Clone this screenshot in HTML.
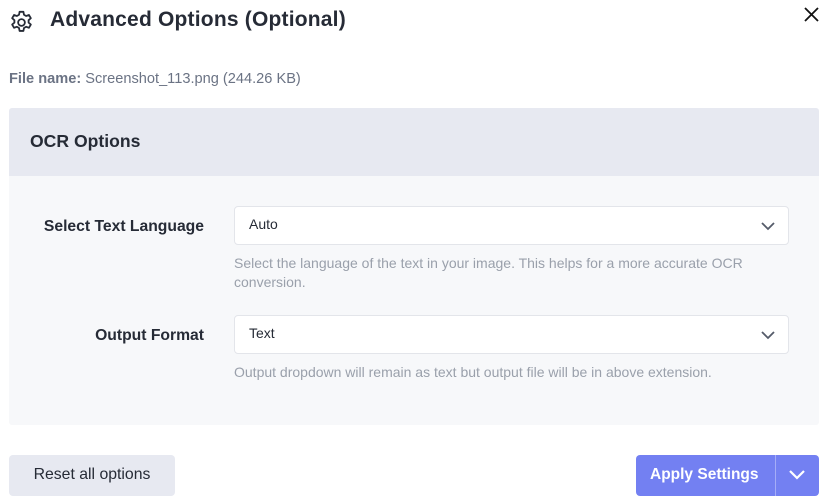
<!DOCTYPE html>
<html><head><style>
*{box-sizing:border-box;margin:0;padding:0}
body{width:826px;height:503px;background:#fff;font-family:"Liberation Sans",sans-serif;position:relative;overflow:hidden;color:#1f2633}
.abs{position:absolute}
h1{position:absolute;left:50px;top:8px;font-size:21px;font-weight:bold;color:#262b36;letter-spacing:.2px}
.fn{left:9px;top:71px;font-size:14.6px;color:#6b7384}
.panel{left:9px;top:108px;width:810px;height:317px;background:#f7f8fa;border-radius:3px}
.ph{left:9px;top:108px;width:810px;height:68px;background:#e7e9f1;border-radius:3px 3px 0 0}
.ph span{position:absolute;left:21px;top:23px;font-size:17.6px;font-weight:bold;color:#262b36}
.lab{font-size:15.7px;font-weight:bold;color:#262b36;text-align:right;width:200px;left:4px}
.sel{left:234px;width:555px;height:39px;background:#fff;border:1px solid #e3e5ea;border-radius:4px;font-size:14px;padding:9px 14px;color:#262b36}
.help{left:234px;font-size:14px;color:#9aa0ab;line-height:19px;width:525px}
.btn{top:455px;height:41px;border-radius:4px}
</style></head><body>
<svg class="abs" style="left:8px;top:9px" width="27" height="27" viewBox="0 0 24 24" fill="none" stroke="#262b36" stroke-width="1.6" stroke-linejoin="round"><path d="M10.3 2.5h3.4l.5 2.6 1.9 1.1 2.5-.9 1.7 2.9-2 1.7v2.2l2 1.7-1.7 2.9-2.5-.9-1.9 1.1-.5 2.6h-3.4l-.5-2.6-1.9-1.1-2.5.9-1.7-2.9 2-1.7v-2.2l-2-1.7 1.7-2.9 2.5.9 1.9-1.1z"/><circle cx="12" cy="12" r="3"/></svg>
<h1>Advanced Options (Optional)</h1>
<svg class="abs" style="left:804px;top:7px" width="15" height="15" viewBox="0 0 15 15" stroke="#111" stroke-width="1.8"><path d="M1 1L14 14M14 1L1 14"/></svg>
<div class="abs fn"><b>File name:</b> Screenshot_113.png (244.26 KB)</div>
<div class="abs panel"></div>
<div class="abs ph"><span>OCR Options</span></div>
<div class="abs lab" style="top:218px">Select Text Language</div>
<div class="abs sel" style="top:206px">Auto</div>
<svg class="abs" style="left:760px;top:221px" width="16" height="10" viewBox="0 0 16 10" fill="none" stroke="#555b6a" stroke-width="1.8"><path d="M2 2l6 6 6-6"/></svg>
<div class="abs help" style="top:254px">Select the language of the text in your image. This helps for a more accurate OCR conversion.</div>
<div class="abs lab" style="top:327px">Output Format</div>
<div class="abs sel" style="top:315px">Text</div>
<svg class="abs" style="left:760px;top:330px" width="16" height="10" viewBox="0 0 16 10" fill="none" stroke="#555b6a" stroke-width="1.8"><path d="M2 2l6 6 6-6"/></svg>
<div class="abs help" style="top:363px">Output dropdown will remain as text but output file will be in above extension.</div>
<div class="abs btn" style="left:9px;width:166px;background:#e7e9f1;font-size:15.8px;color:#262b36;text-align:center;line-height:40px">Reset all options</div>
<div class="abs btn" style="left:636px;width:183px;background:#7380f2"></div>
<div class="abs" style="left:650px;top:466px;font-size:15.5px;font-weight:bold;color:#fff">Apply Settings</div>
<div class="abs" style="left:775px;top:455px;width:1px;height:41px;background:#a5adf7"></div>
<svg class="abs" style="left:788px;top:469px" width="18" height="11" viewBox="0 0 18 11" fill="none" stroke="#fff" stroke-width="2.2"><path d="M2 2l7 7 7-7"/></svg>
</body></html>
